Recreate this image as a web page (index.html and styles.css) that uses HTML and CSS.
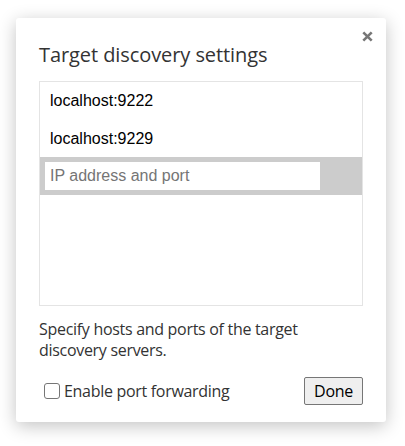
FILE: index.html
```html
<!DOCTYPE html>
<html>
<head>
<meta charset="utf-8">
<link rel="stylesheet" href="styles.css">
</head>
<body>
<div class="dialog">
  <button class="close" aria-label="Close">
    <svg width="11" height="11" viewBox="0 0 11 11"><path d="M1.3 1.3 L9.7 9.7 M9.7 1.3 L1.3 9.7" stroke="#777" stroke-width="2.6" stroke-linecap="butt"/></svg>
  </button>
  <div class="title">Target discovery settings</div>
  <div class="list">
    <div class="item">localhost:9222</div>
    <div class="item">localhost:9229</div>
    <div class="item editing"><input class="field" type="text" placeholder="IP address and port"></div>
  </div>
  <p class="note">Specify hosts and ports of the target discovery servers.</p>
  <div class="footer">
    <label class="check"><input type="checkbox" class="box"><span>Enable port forwarding</span></label>
    <button class="done">Done</button>
  </div>
</div>
</body>
</html>
```
FILE: styles.css
```css
html, body {
  margin: 0;
  padding: 0;
  background: #ffffff;
}
body {
  font-family: "Open Sans", "Noto Sans", sans-serif;
  color: #333;
  padding: 18px 0 24px;
  min-height: 446px;
  box-sizing: border-box;
}
.dialog {
  position: relative;
  box-sizing: border-box;
  width: 370px;
  margin: 0 0 0 16px;
  padding: 23px 23px 17px;
  background: #fff;
  border-radius: 3px;
  box-shadow: 0 4px 18px rgba(0, 0, 0, 0.24);
}
.close {
  position: absolute;
  top: 13px;
  right: 13px;
  width: 11px;
  height: 11px;
  padding: 0;
  border: 0;
  background: none;
  display: block;
}
.close svg { display: block; }
.title {
  font-size: 20px;
  line-height: 28px;
  letter-spacing: -0.08px;
  color: #333;
}
.list {
  margin-top: 12px;
  height: 225px;
  box-sizing: border-box;
  border: 1px solid #e4e4e4;
}
.item {
  height: 37.5px;
  line-height: 37.5px;
  padding-left: 10px;
  font-family: "Liberation Sans", Arial, sans-serif;
  font-size: 16px;
  color: #000;
  box-sizing: border-box;
}
.item.editing {
  background: #ccc;
  padding: 5px;
  line-height: normal;
}
.field {
  display: block;
  box-sizing: border-box;
  width: 275px;
  height: 28px;
  margin: 0;
  border: 0;
  outline: none;
  padding: 0 5px;
  background: #fff;
  font-family: "Liberation Sans", Arial, sans-serif;
  font-size: 16px;
  color: #000;
}
.field::placeholder { color: #757575; }
.note {
  margin: 13px 0 0;
  font-size: 16px;
  line-height: 21px;
  letter-spacing: -0.3px;
  color: #333;
}
.footer {
  margin-top: 16px;
  display: flex;
  align-items: center;
  justify-content: space-between;
}
.check {
  display: flex;
  align-items: center;
  font-size: 16px;
  letter-spacing: -0.3px;
  color: #333;
}
.box {
  appearance: none;
  -webkit-appearance: none;
  width: 16px;
  height: 16px;
  margin: 0 4px 0 5px;
  box-sizing: border-box;
  border: 1px solid #767676;
  border-radius: 3px;
  background: #fff;
}
.done {
  box-sizing: border-box;
  width: 59px;
  height: 28px;
  padding: 0;
  border: 1px solid #767676;
  border-radius: 2px;
  background: #efefef;
  font-family: "Open Sans", "Noto Sans", sans-serif;
  font-size: 16px;
  letter-spacing: -0.3px;
  color: #000;
}
```
